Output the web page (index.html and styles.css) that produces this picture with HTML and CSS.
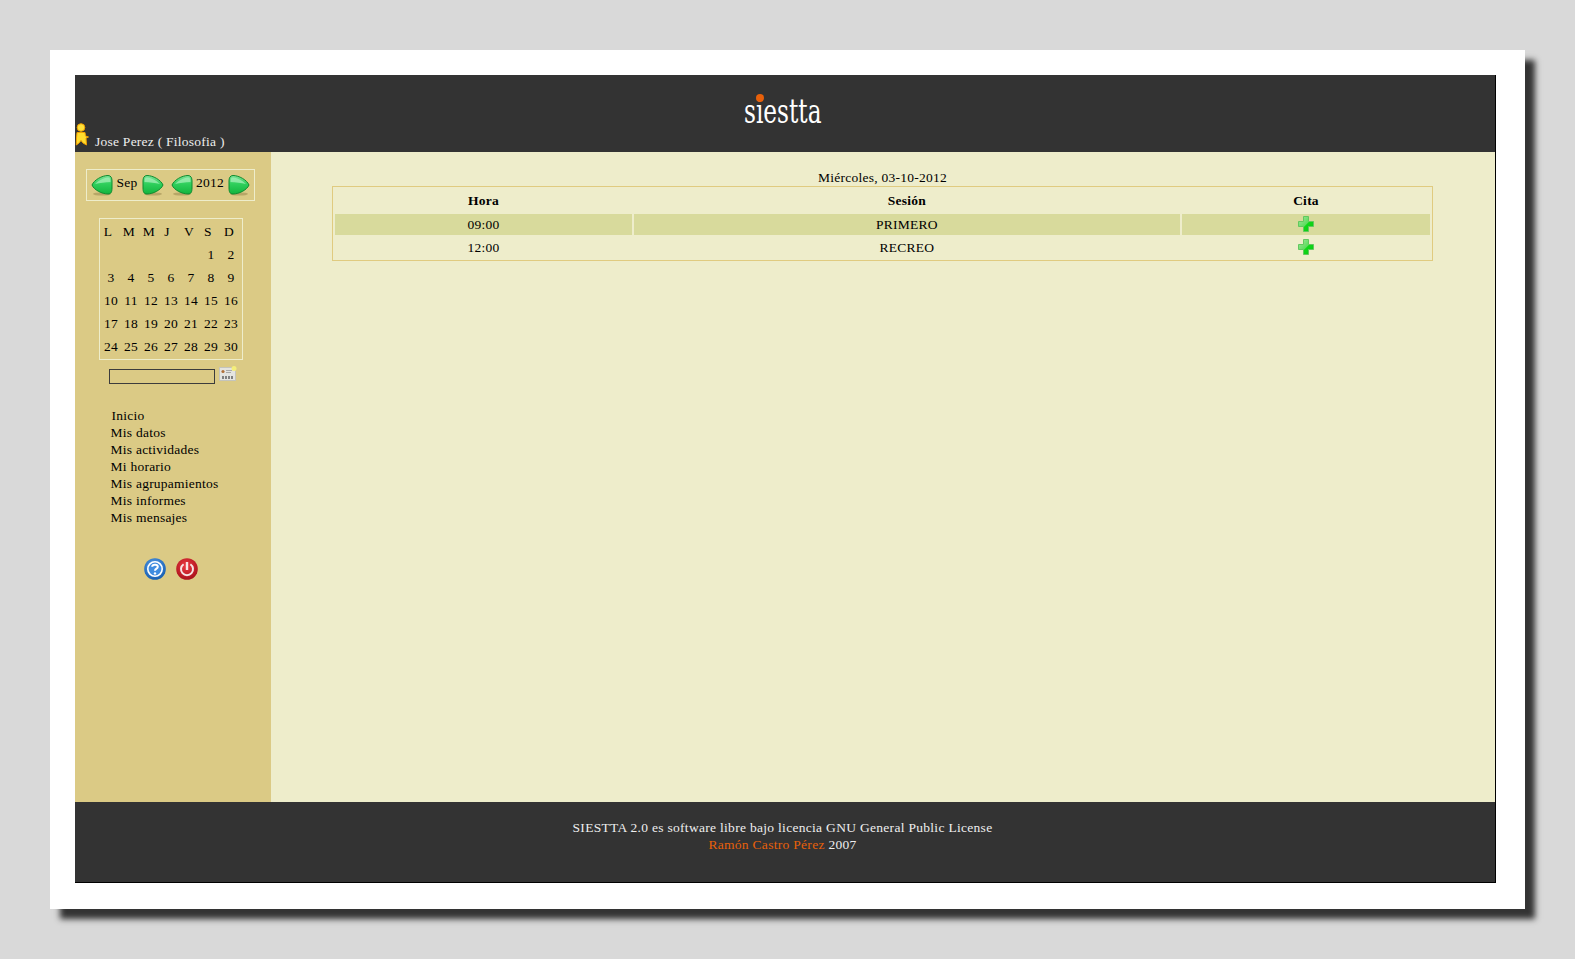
FILE: index.html
```html
<!DOCTYPE html>
<html lang="es">
<head>
    <meta charset="UTF-8">
    <meta name="viewport" content="width=device-width, initial-scale=1.0">
    <title>Siestta</title>
    <link rel="stylesheet" href="styles.css">
</head>
<body>
    <svg class="defs" width="0" height="0">
        <defs>
            <linearGradient id="green-fill" x1="0" y1="0" x2="0" y2="1">
                <stop offset="0" stop-color="#7fe59a"/>
                <stop offset="0.45" stop-color="#2fcf5c"/>
                <stop offset="1" stop-color="#12b53e"/>
            </linearGradient>
            <linearGradient id="plus-fill" x1="0" y1="0" x2="1" y2="1">
                <stop offset="0" stop-color="#a6e8a0"/>
                <stop offset="0.5" stop-color="#5fdc5f"/>
                <stop offset="0.55" stop-color="#10d818"/>
                <stop offset="1" stop-color="#0cc414"/>
            </linearGradient>
            <radialGradient id="blue-fill" cx="0.45" cy="0.35" r="0.7">
                <stop offset="0" stop-color="#5aa2ec"/>
                <stop offset="1" stop-color="#1259ad"/>
            </radialGradient>
            <radialGradient id="red-fill" cx="0.45" cy="0.35" r="0.7">
                <stop offset="0" stop-color="#ee3b42"/>
                <stop offset="1" stop-color="#a40e18"/>
            </radialGradient>
            <symbol id="arrow-left" viewBox="0 0 23 22">
                <ellipse cx="12" cy="20" rx="9" ry="1.6" fill="#a8975a" opacity="0.7"/>
                <path d="M2 11 C4 6 12 1.5 18 1.5 C21 1.5 22 4 22 7 L22 14 C22 18 21 20 18 20 C12 20 4 16 2 11 Z" fill="url(#green-fill)" stroke="#0d8a2e" stroke-width="1"/>
                <path d="M5 10 C8 7 13 4 18 3.5 C20 3.5 20.5 5 20.5 8 C15 8 10 9 5 10 Z" fill="#a5efb8" opacity="0.75"/>
            </symbol>
            <symbol id="arrow-right" viewBox="0 0 23 22">
                <ellipse cx="11" cy="20" rx="9" ry="1.6" fill="#a8975a" opacity="0.7"/>
                <path d="M21 11 C19 6 11 1.5 5 1.5 C2 1.5 1 4 1 7 L1 14 C1 18 2 20 5 20 C11 20 19 16 21 11 Z" fill="url(#green-fill)" stroke="#0d8a2e" stroke-width="1"/>
                <path d="M18 10 C15 7 10 4 5 3.5 C3 3.5 2.5 5 2.5 8 C8 8 13 9 18 10 Z" fill="#a5efb8" opacity="0.75"/>
            </symbol>
            <symbol id="plus" viewBox="0 0 16 16">
                <path d="M5.5 0.5 H10.5 V5.5 H15.5 V10.5 H10.5 V15.5 H5.5 V10.5 H0.5 V5.5 H5.5 Z" fill="url(#plus-fill)" stroke="#62c85e" stroke-width="1"/>
            </symbol>
        </defs>
    </svg>

    <div class="sheet">
        <div class="wrap">
            <header class="top">
                <div class="logo"><span class="logo-text">siestta</span><span class="logo-dot"></span></div>
                <div class="user">
                    <svg class="user-icon" width="14" height="23" viewBox="0 0 14 23">
                        <circle cx="6" cy="4.5" r="3.8" fill="#ffe23a" stroke="#f0a000"/>
                        <path d="M2 9.5 H10 L10.5 13 L13.5 14 L11 15 L11.5 22 L8 20 L6 17.5 L4 20 L1.3 22 L1.5 15 Z" fill="#ffdc2e" stroke="#f0a000"/>
                    </svg>
                    <span>Jose Perez ( Filosofia )</span>
                </div>
            </header>

            <div class="middle">
                <aside class="side">
                    <div class="month-nav">
                        <svg class="arrow"><use href="#arrow-left"/></svg>
                        <span class="nav-label">Sep</span>
                        <svg class="arrow"><use href="#arrow-right"/></svg>
                        <svg class="arrow arrow-year"><use href="#arrow-left"/></svg>
                        <span class="nav-label">2012</span>
                        <svg class="arrow"><use href="#arrow-right"/></svg>
                    </div>

                    <table class="cal">
                        <tr><th class="th-l">L</th><th>M</th><th>M</th><th class="th-j">J</th><th>V</th><th class="th-l">S</th><th>D</th></tr>
                        <tr><td></td><td></td><td></td><td></td><td></td><td>1</td><td>2</td></tr>
                        <tr><td>3</td><td>4</td><td>5</td><td>6</td><td>7</td><td>8</td><td>9</td></tr>
                        <tr><td>10</td><td>11</td><td>12</td><td>13</td><td>14</td><td>15</td><td>16</td></tr>
                        <tr><td>17</td><td>18</td><td>19</td><td>20</td><td>21</td><td>22</td><td>23</td></tr>
                        <tr><td>24</td><td>25</td><td>26</td><td>27</td><td>28</td><td>29</td><td>30</td></tr>
                    </table>

                    <div class="date-pick">
                        <input type="text" class="date-input">
                        <svg class="date-icon" width="18" height="15" viewBox="0 0 18 15">
                            <rect x="0.5" y="1.5" width="16" height="13" fill="#e4e4e0" stroke="#c4c4bc"/>
                            <circle cx="15" cy="2.5" r="2.5" fill="#f4ee7a"/>
                            <circle cx="4" cy="5.5" r="1.6" fill="#b0703a"/>
                            <rect x="7" y="4" width="6" height="1" fill="#a8a8a8"/>
                            <rect x="7" y="6" width="5" height="1" fill="#a8a8a8"/>
                            <rect x="3" y="10" width="2" height="3" fill="#808080"/>
                            <rect x="6" y="10" width="2" height="3" fill="#808080"/>
                            <rect x="9" y="10" width="2" height="3" fill="#808080"/>
                            <rect x="12" y="10" width="2" height="3" fill="#808080"/>
                        </svg>
                    </div>

                    <ul class="menu">
                        <li class="first"><a href="#">Inicio</a></li>
                        <li><a href="#">Mis datos</a></li>
                        <li><a href="#">Mis actividades</a></li>
                        <li><a href="#">Mi horario</a></li>
                        <li><a href="#">Mis agrupamientos</a></li>
                        <li><a href="#">Mis informes</a></li>
                        <li><a href="#">Mis mensajes</a></li>
                    </ul>

                    <div class="side-icons">
                        <svg width="22" height="22" viewBox="0 0 22 22">
                            <circle cx="11" cy="11" r="10.8" fill="url(#blue-fill)"/>
                            <circle cx="11" cy="11" r="7.2" fill="#3f8ce0" stroke="#fff" stroke-width="1.6"/>
                            <path d="M8.2 8.8 C8.2 6 13.8 6 13.8 8.8 C13.8 10.8 11 10.6 11 12.8" fill="none" stroke="#fff" stroke-width="2"/>
                            <circle cx="11" cy="15.4" r="1.2" fill="#fff"/>
                        </svg>
                        <svg width="22" height="22" viewBox="0 0 22 22">
                            <circle cx="11" cy="11" r="10.8" fill="url(#red-fill)"/>
                            <path d="M7.6 6.2 A6 6 0 1 0 14.4 6.2" fill="none" stroke="#f6e4e4" stroke-width="2"/>
                            <rect x="9.8" y="4" width="2.4" height="8" fill="#f6e4e4"/>
                        </svg>
                    </div>
                </aside>

                <main class="content">
                    <div class="date-title">Miércoles, 03-10-2012</div>
                    <table class="agenda">
                        <colgroup>
                            <col class="col-hora">
                            <col class="col-sesion">
                            <col class="col-cita">
                        </colgroup>
                        <tr class="head">
                            <th>Hora</th><th>Sesión</th><th>Cita</th>
                        </tr>
                        <tr class="odd">
                            <td>09:00</td><td>PRIMERO</td>
                            <td><svg class="plus"><use href="#plus"/></svg></td>
                        </tr>
                        <tr>
                            <td>12:00</td><td>RECREO</td>
                            <td><svg class="plus"><use href="#plus"/></svg></td>
                        </tr>
                    </table>
                </main>
            </div>

            <footer class="bottom">
                <div>SIESTTA 2.0 es software libre bajo licencia GNU General Public License</div>
                <div><a href="#">Ramón Castro Pérez</a> 2007</div>
            </footer>
        </div>
    </div>
</body>
</html>
```

FILE: styles.css
```css
body {
    margin: 0;
    padding: 50px;
    height: 959px;
    box-sizing: border-box;
    background-color: #d9d9d9;
    font-family: "Liberation Serif", serif;
    font-size: 13.5px;
    letter-spacing: 0.25px;
    color: #000;
}

.defs {
    position: absolute;
}

a {
    color: inherit;
    text-decoration: none;
}

.sheet {
    height: 859px;
    box-sizing: border-box;
    padding: 25px 29px 26px 25px;
    background-color: #fff;
    box-shadow: 10px 10px 6px #333;
}

.wrap {
    height: 100%;
    display: flex;
    flex-direction: column;
    box-sizing: border-box;
    border-right: 1px solid #000;
    border-bottom: 1px solid #000;
}

/* header */
.top {
    position: relative;
    height: 77px;
    background-color: #333;
    color: #eee;
    display: flex;
    align-items: flex-end;
}

.logo {
    position: absolute;
    left: 669px;
    top: 20px;
    line-height: 32px;
    color: #fff;
}

.logo-text {
    display: inline-block;
    transform: scaleX(0.76);
    transform-origin: left center;
    font-family: "DejaVu Serif Condensed", "DejaVu Serif", serif;
    font-size: 34px;
    letter-spacing: 0;
}

.logo-dot {
    position: absolute;
    left: 12px;
    top: -1px;
    width: 8px;
    height: 8px;
    border-radius: 50%;
    background-color: #e8600a;
}

.user {
    display: flex;
    align-items: flex-end;
    gap: 6px;
    margin-bottom: 6px;
    line-height: 17px;
}

.user span {
    margin-bottom: -4px;
}

/* sidebar */
.middle {
    flex: 1;
    display: flex;
    min-height: 0;
}

.side {
    width: 196px;
    flex-shrink: 0;
    box-sizing: border-box;
    padding-top: 17px;
    background-color: #dbca85;
}

.month-nav {
    width: 169px;
    height: 32px;
    margin-left: 11px;
    box-sizing: border-box;
    border: 1px solid #eeedcb;
    display: flex;
    align-items: center;
    padding-left: 3px;
}

.arrow {
    width: 23px;
    height: 22px;
    flex-shrink: 0;
}

.arrow-year {
    margin-left: 5px;
}

.nav-label {
    margin: -5px 4px 0 3.5px;
    line-height: 17px;
}

.cal {
    margin: 17px 0 0 24px;
    width: 144px;
    height: 142px;
    box-sizing: border-box;
    border: 1px solid #eeedcb;
    border-collapse: separate;
    border-spacing: 0;
    padding: 1px;
    table-layout: fixed;
}

.cal th,
.cal td {
    width: 20px;
    height: 23px;
    padding: 0;
    text-align: center;
    font-weight: normal;
}

.cal th {
    padding-right: 4px;
    box-sizing: border-box;
}

.cal .th-l {
    padding-right: 6px;
}

.cal .th-j {
    padding-right: 8px;
}

.date-pick {
    display: flex;
    align-items: flex-start;
    margin: 9px 0 0 34px;
    height: 15px;
}

.date-input {
    width: 106px;
    height: 15px;
    box-sizing: border-box;
    margin: 0;
    padding: 0;
    border: 1px solid #3c3c3c;
    background: transparent;
}

.date-icon {
    margin: -3px 0 0 4px;
}

.menu {
    list-style: none;
    margin: 23px 0 0 35.5px;
    padding: 0;
    line-height: 17px;
}

.menu .first {
    margin-left: 1px;
}

.side-icons {
    display: flex;
    gap: 10px;
    margin: 32px 0 0 69px;
}

/* main content */
.content {
    flex: 1;
    padding: 17px 1px 0 0;
    background-color: #eeedcb;
}

.date-title {
    text-align: center;
    line-height: 17px;
}

.agenda {
    width: 1101px;
    margin: 0 auto;
    border: 1px solid #e0cb80;
    border-collapse: separate;
    border-spacing: 2px;
    table-layout: fixed;
}

.col-hora {
    width: 297px;
}

.col-sesion {
    width: 546px;
}

.col-cita {
    width: 248px;
}

.agenda th,
.agenda td {
    padding: 0;
    text-align: center;
    height: 21px;
    line-height: 17px;
}

.agenda th {
    height: 23px;
}

.agenda .odd td {
    background-color: #d8da9c;
}

.plus {
    display: block;
    width: 16px;
    height: 16px;
    margin: -1px auto 0;
}

/* footer */
.bottom {
    height: 80px;
    box-sizing: border-box;
    padding: 17px 5px 0 0;
    background-color: #333;
    color: #eee;
    text-align: center;
    line-height: 17px;
    letter-spacing: 0.3px;
}

.bottom a {
    color: #e8600a;
}
```
